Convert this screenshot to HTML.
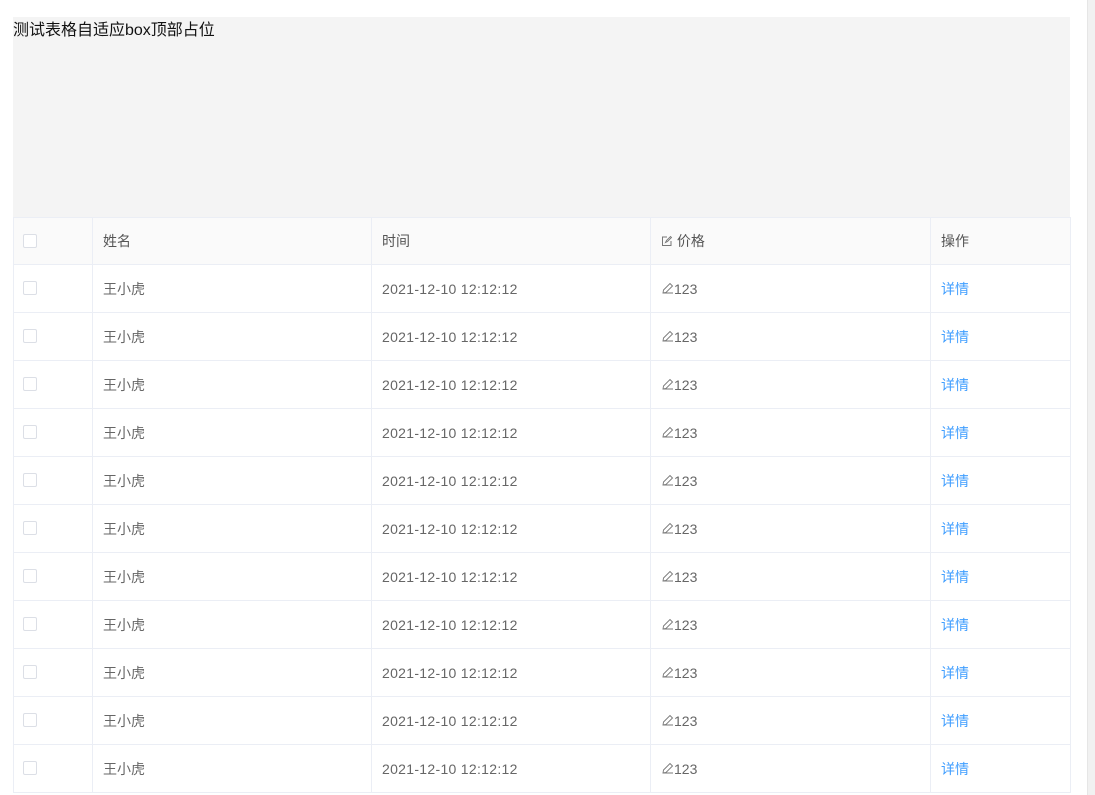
<!DOCTYPE html>
<html><head><meta charset="utf-8"><style>
body{margin:0;width:1095px;height:795px;overflow:hidden;background:#fff;font-family:"Liberation Sans","Noto Sans CJK SC",sans-serif;position:relative}
.box{position:absolute;left:13px;top:17px;width:1057px;height:200px;background:#f4f4f4;font-size:16px;color:#111;line-height:26px;padding-top:1px;box-sizing:border-box}
table{position:absolute;left:13px;top:217px;border-collapse:collapse;table-layout:fixed;width:1057px;font-size:14px;color:#666}
td,th{border:1px solid #ebeef5;height:47px;padding:0 0 0 10px;text-align:left;font-weight:normal}
th{background:#fafafa;color:#555;height:46px}
.cb{display:inline-block;width:12px;height:12px;border:1px solid #dcdfe6;border-radius:2px;background:#fff;vertical-align:middle;margin:-3px 0 0 -1px}
a{color:#409eff;text-decoration:none}
.sb{position:absolute;right:0;top:0;width:7px;height:795px;background:#f1f1f1;border-left:1px solid #e6e6e6}
</style></head><body>
<div class="box">测试表格自适应box顶部占位</div>
<table>
<colgroup><col style="width:79px"><col style="width:279px"><col style="width:279px"><col style="width:280px"><col style="width:140px"></colgroup>
<tr><th><span class="cb"></span></th><th>姓名</th><th>时间</th><th><svg width="12" height="12" viewBox="0 0 12 12" style="vertical-align:-1px"><path d="M10 6v4.5H1.5V2H6" fill="none" stroke="#777"/><path d="M4.5 7.5l1-2 4-4 1 1-4 4z" fill="none" stroke="#777" stroke-width=".9"/></svg> 价格</th><th>操作</th></tr>
<tbody id="b"></tbody>
</table>
<div class="sb"></div>
<script>
var r='';for(var i=0;i<11;i++)r+='<tr><td><span class="cb"></span></td><td>王小虎</td><td style="letter-spacing:.3px">2021-12-10 12:12:12</td><td><svg width="13" height="13" viewBox="0 0 13 13" style="vertical-align:-1px"><path d="M2 11l.5-3L9 1.5l2.5 2.5L5 10.5z M2 11h10" fill="none" stroke="#777" stroke-width=".9"/></svg>123</td><td><a>详情</a></td></tr>';
document.getElementById('b').innerHTML=r;
</script>
</body></html>
